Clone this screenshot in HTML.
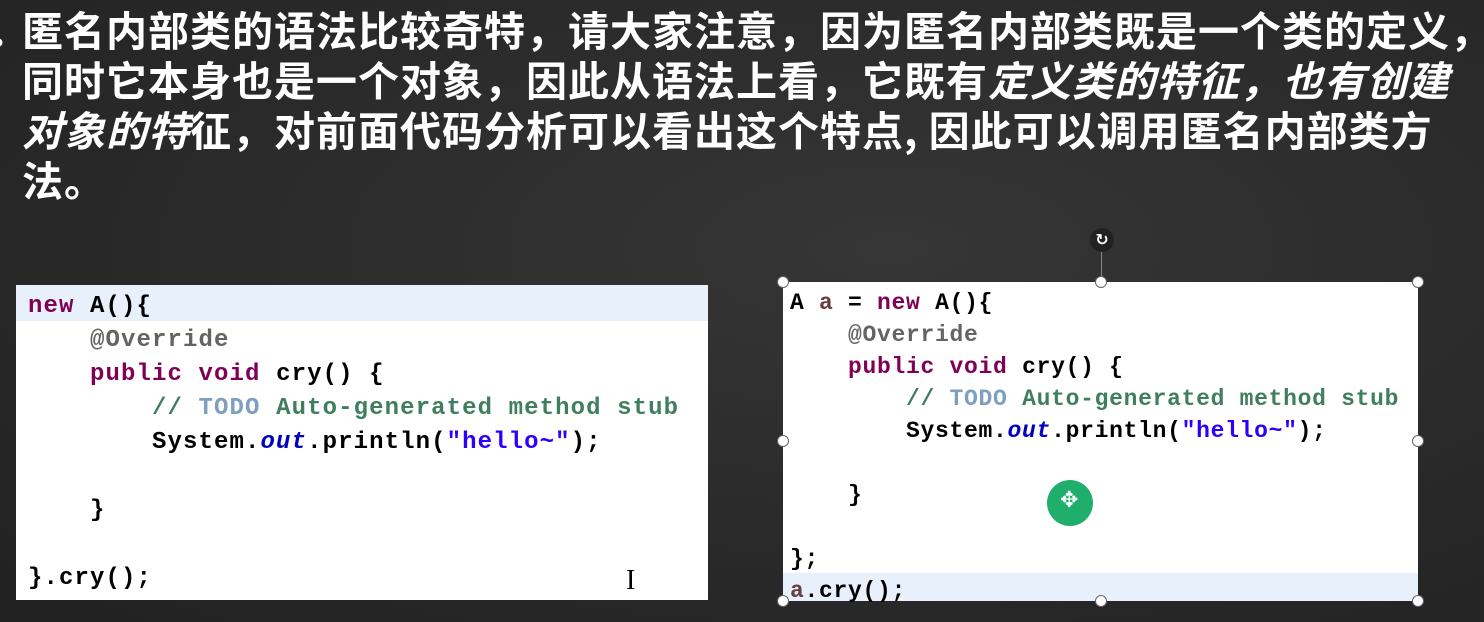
<!DOCTYPE html>
<html><head><meta charset="utf-8"><style>
html,body{margin:0;padding:0}
body{width:1484px;height:622px;overflow:hidden;position:relative;
background:radial-gradient(ellipse at 60% 40%,#363636 0%,#2a2a2a 55%,#212121 100%);}
.t{position:absolute;left:22px;color:#fff;font-family:"Noto Sans CJK SC","WenQuanYi Zen Hei",sans-serif;font-weight:700;font-size:41px;line-height:50px;white-space:nowrap;letter-spacing:1px}
.t i{font-style:italic}
.box{position:absolute;background:#fff}
.code{position:absolute;font-family:"Liberation Mono",monospace;font-weight:bold;white-space:pre;color:#000}
.k{color:#7f0055}.a{color:#646464}.c{color:#3f7f5f}.td{color:#7f9fbf}.s{color:#2a00ff}.f{color:#0000c0;font-style:italic}.v{color:#6a3e3e}
.h{position:absolute;width:12px;height:12px;border-radius:50%;background:#fff;border:1.5px solid #666;box-sizing:border-box}
</style></head><body>
<div class="t" style="top:3px;left:-8px">.</div>
<div class="t" style="top:3px">匿名内部类的语法比较奇特，请大家注意，因为匿名内部类既是一个类的定义，</div>
<div class="t" style="top:53px">同时它本身也是一个对象，因此从语法上看，它既有<i>定义类的特征，也有创建</i></div>
<div class="t" style="top:103px"><i>对象的特</i>征，对前面代码分析可以看出这个特点, 因此可以调用匿名内部类方</div>
<div class="t" style="top:153px">法。</div>

<div class="box" style="left:16px;top:285px;width:692px;height:315px">
<div style="position:absolute;left:0;top:0;width:692px;height:36px;background:#e8f0fb"></div>
<div class="code" style="left:12px;top:5px;font-size:24px;line-height:34px;letter-spacing:1.1px"><span class="k">new</span> A(){
    <span class="a">@Override</span>
    <span class="k">public</span> <span class="k">void</span> cry() {
        <span class="c">// <span class="td">TODO</span> Auto-generated method stub</span>
        System.<span class="f">out</span>.println(<span class="s">"hello~"</span>);

    }

}.cry();</div>
<div style="position:absolute;left:610px;top:280px;font-family:'Liberation Serif',serif;font-size:28px;color:#000">I</div>
</div>

<div style="position:absolute;left:1101px;top:248px;width:1px;height:34px;background:#888"></div>
<div style="position:absolute;left:1090px;top:228px;width:24px;height:24px;border-radius:50%;background:#222;color:#fff;font:bold 16px 'DejaVu Sans',sans-serif;text-align:center;line-height:24px">↻</div>
<div class="box" style="left:783px;top:282px;width:635px;height:319px">
<div style="position:absolute;left:0;top:291px;width:635px;height:28px;background:#e8f0fb"></div>
<div class="code" style="left:7px;top:5px;font-size:23px;line-height:32px;letter-spacing:0.7px">A <span class="v">a</span> = <span class="k">new</span> A(){
    <span class="a">@Override</span>
    <span class="k">public</span> <span class="k">void</span> cry() {
        <span class="c">// <span class="td">TODO</span> Auto-generated method stub</span>
        System.<span class="f">out</span>.println(<span class="s">"hello~"</span>);

    }

};
<span class="v">a</span>.cry();</div>
<div style="position:absolute;left:264px;top:198px;width:46px;height:46px;border-radius:50%;background:#1fae6b"></div>
<div style="position:absolute;left:277px;top:206px;color:#fff;font:bold 22px 'DejaVu Sans',sans-serif">✥</div>
</div>
<div class="h" style="left:777px;top:276px"></div>
<div class="h" style="left:1095px;top:276px"></div>
<div class="h" style="left:1412px;top:276px"></div>
<div class="h" style="left:777px;top:435px"></div>
<div class="h" style="left:1412px;top:435px"></div>
<div class="h" style="left:777px;top:595px"></div>
<div class="h" style="left:1095px;top:595px"></div>
<div class="h" style="left:1412px;top:595px"></div>
</body></html>
